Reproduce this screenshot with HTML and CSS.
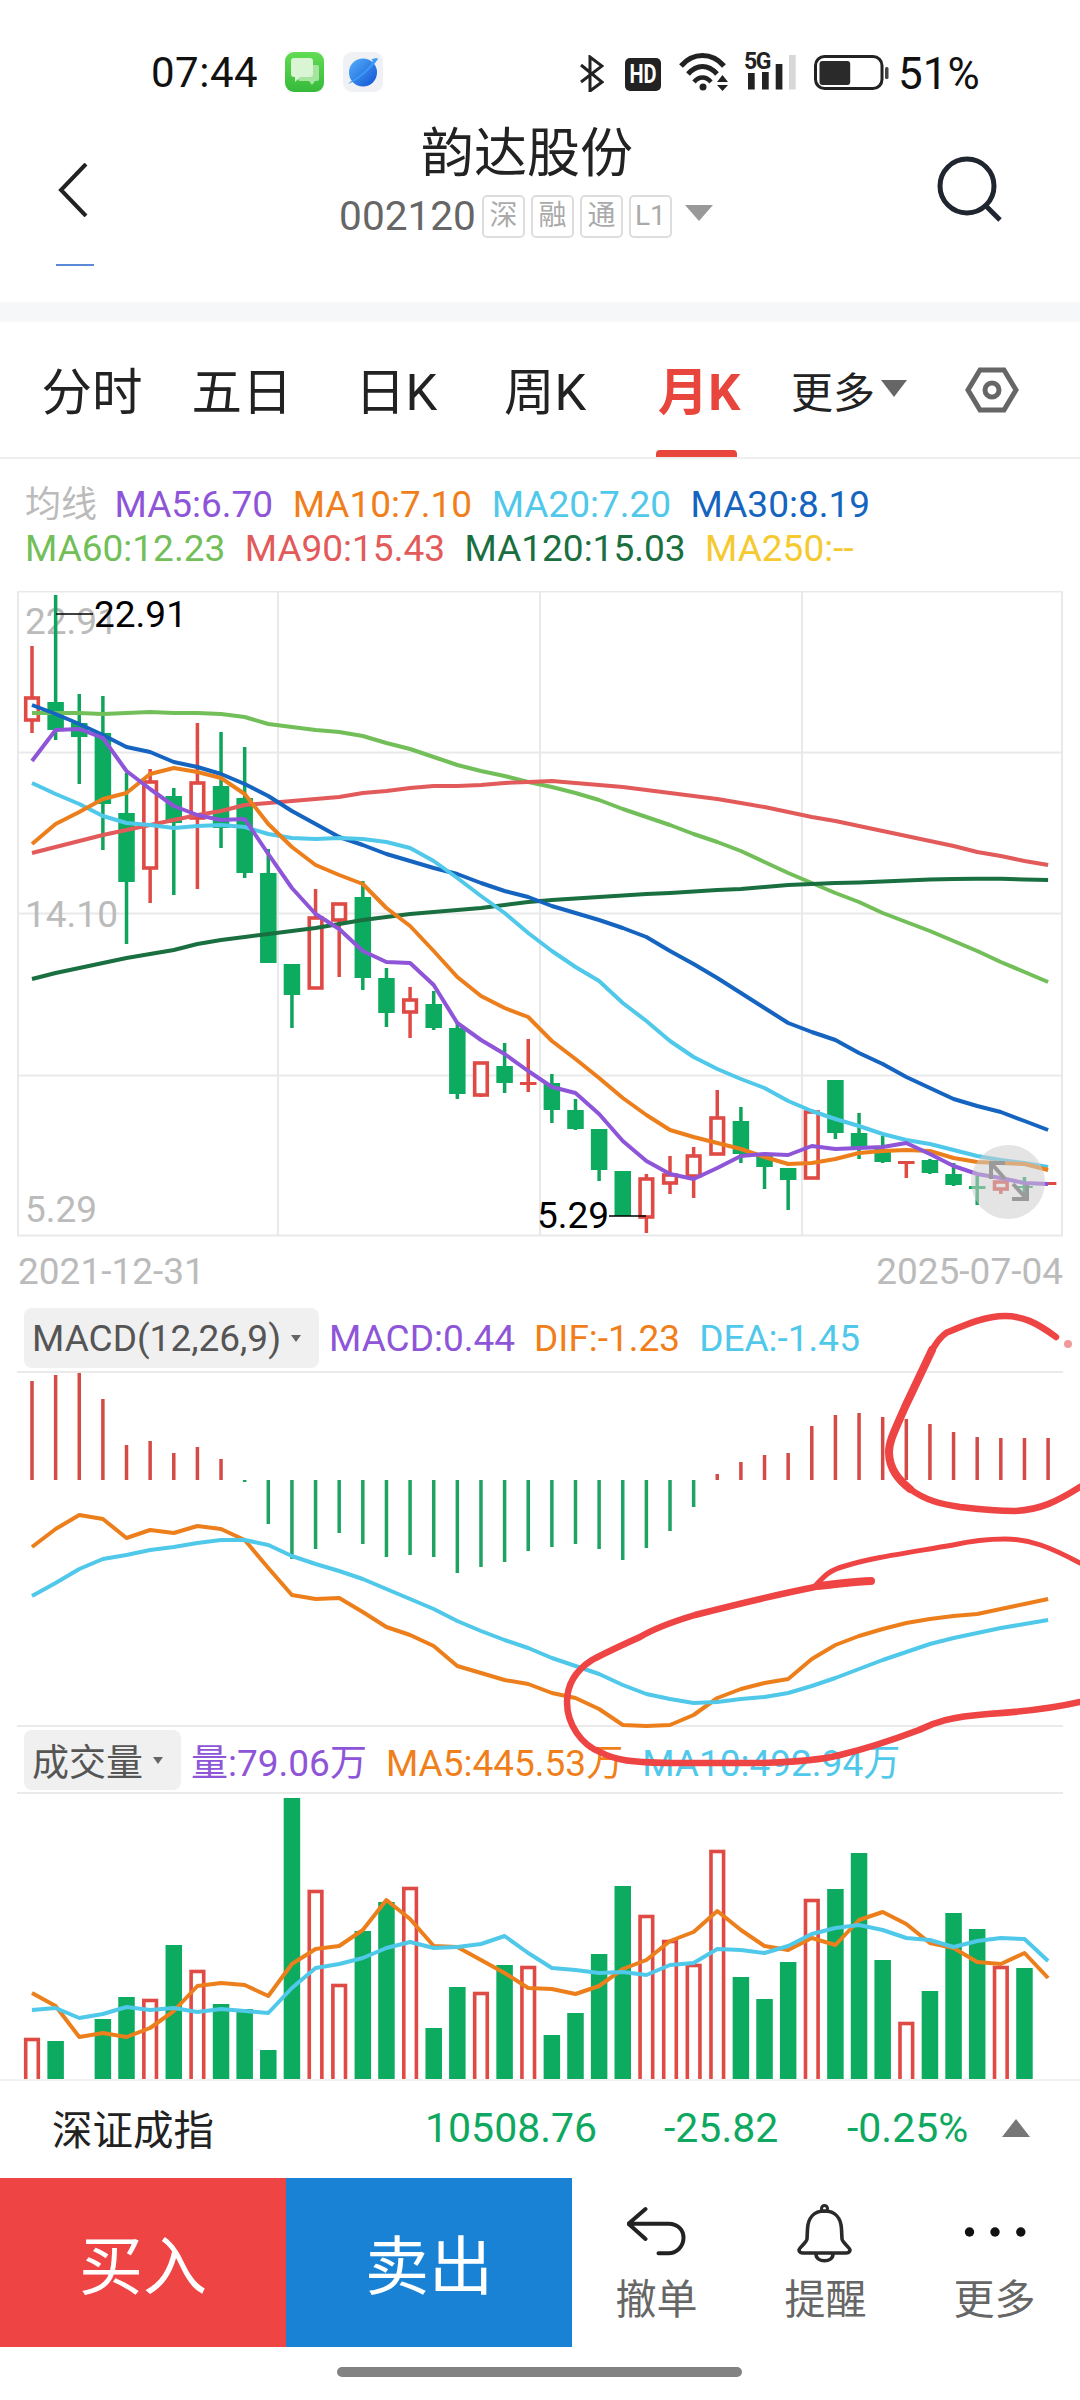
FILE: index.html
```html
<!DOCTYPE html>
<html lang="zh-CN">
<head>
    <meta charset="UTF-8">
    <meta name="viewport" content="width=device-width, initial-scale=1.0">
    <title>韵达股份</title>
    <link rel="stylesheet" href="styles.css">
</head>
<body>
    <div class="page">
        <!-- status bar -->
        <div class="status-bar">
            <span class="clock">07:44</span>
            <svg class="app-icon" viewBox="0 0 39 40">
                <defs>
                    <linearGradient id="msg-bg" x1="0" y1="0" x2="0" y2="1">
                        <stop offset="0" stop-color="#62dc54"/>
                        <stop offset="1" stop-color="#36b93a"/>
                    </linearGradient>
                    <linearGradient id="planet-bg" x1="0" y1="0" x2="1" y2="1">
                        <stop offset="0" stop-color="#53b0fa"/>
                        <stop offset="1" stop-color="#1252d4"/>
                    </linearGradient>
                </defs>
                <rect width="39" height="40" rx="9" fill="url(#msg-bg)"/>
                <path d="M15 13 H32 Q34 13 34 15 V27 Q34 29 32 29 H30 L27 33 L24 29 H15 Q13 29 13 27 V15 Q13 13 15 13 Z" fill="#a6e59f"/>
                <path d="M9 6 H25 Q28 6 28 9 V22 Q28 25 25 25 H15 L10 30 V25 H9 Q6 25 6 22 V9 Q6 6 9 6 Z" fill="#d9f5d4"/>
            </svg>
            <svg class="app-icon app-icon-2" viewBox="0 0 40 40">
                <rect width="40" height="40" rx="9" fill="#eff1f5"/>
                <circle cx="20" cy="20.5" r="14" fill="url(#planet-bg)"/>
                <path d="M5 32 C12 30 27 19 35 7 C36 6 30 6 28 8 C32 7 28 13 22 19 C15 25 8 29 5 32 Z" fill="#3d9bf5"/>
            </svg>
            <div class="status-right">
                <svg class="ic-bt" viewBox="0 0 24 37">
                    <path d="M1 10 L22 27 L10 36 V2 L22 11 L1 27" fill="none" stroke="#222" stroke-width="3"/>
                </svg>
                <span class="hd"><b>HD</b></span>
                <svg class="ic-wifi" viewBox="0 0 51 38">
                    <path d="M2 13 C14 -1 33 -1 45 13" fill="none" stroke="#222" stroke-width="5"/>
                    <path d="M9 21 C18 11 29 11 38 21" fill="none" stroke="#222" stroke-width="5"/>
                    <path d="M15 29 C20 23 27 23 32 29" fill="none" stroke="#222" stroke-width="4.5"/>
                    <circle cx="24" cy="34" r="3.5" fill="#222"/>
                    <path d="M38 29 L43.5 22 L49 29 Z M38 32 H49 L43.5 38 Z" fill="#222"/>
                </svg>
                <div class="ic-signal">
                    <span class="five-g">5G</span>
                    <svg viewBox="0 0 48 35">
                        <rect x="0" y="18" width="6.7" height="16.5" fill="#222"/>
                        <rect x="14" y="17" width="6.7" height="17.5" fill="#222"/>
                        <rect x="27.7" y="9" width="6.7" height="25.5" fill="#222"/>
                        <rect x="41" y="0" width="6.7" height="34.5" fill="#d8d8d8"/>
                    </svg>
                </div>
                <svg class="ic-battery" viewBox="0 0 75 35">
                    <rect x="1.5" y="1.5" width="66.5" height="32" rx="9" fill="none" stroke="#222" stroke-width="3"/>
                    <rect x="5.5" y="6" width="30.7" height="24" rx="3" fill="#2a2a2a"/>
                    <rect x="71" y="12" width="3.5" height="12" rx="1.5" fill="#444"/>
                </svg>
                <span class="battery-pct">51%</span>
            </div>
        </div>

        <!-- header -->
        <div class="header">
            <svg class="back" viewBox="0 0 30 54">
                <path d="M28 1 L3 27 L28 53" fill="none" stroke="#222" stroke-width="4"/>
            </svg>
            <div class="header-center">
                <div class="stock-name">韵达股份</div>
                <div class="stock-code">
                    <span class="code">002120</span>
                    <span class="badge">深</span>
                    <span class="badge">融</span>
                    <span class="badge">通</span>
                    <span class="badge">L1</span>
                    <span class="code-arrow"></span>
                </div>
            </div>
            <svg class="search" viewBox="0 0 66 66">
                <circle cx="31" cy="30" r="27" fill="none" stroke="#1f2630" stroke-width="5"/>
                <path d="M50 50 L64 64" stroke="#1f2630" stroke-width="5"/>
            </svg>
            <span class="header-dash"></span>
        </div>
        <div class="strip"></div>

        <!-- period tabs -->
        <div class="tabs">
            <span class="tab">分时</span>
            <span class="tab">五日</span>
            <span class="tab">日K</span>
            <span class="tab">周K</span>
            <span class="tab on">月K</span>
            <span class="tab tab-more">更多<i class="tab-arrow"></i></span>
            <span class="tab">
                <svg class="hex" viewBox="0 0 54 46">
                    <path d="M15 3 H39 L51 23 L39 43 H15 L3 23 Z" fill="none" stroke="#666" stroke-width="5"/>
                    <circle cx="27" cy="23" r="7" fill="none" stroke="#666" stroke-width="5"/>
                </svg>
            </span>
        </div>

        <!-- moving averages -->
        <div class="ma-legend">
            <div class="ma-row">
                <span class="c-gray ma-title">均线</span>
                <span class="c-ma5">MA5:6.70</span>
                <span class="c-ma10">MA10:7.10</span>
                <span class="c-ma20">MA20:7.20</span>
                <span class="c-ma30">MA30:8.19</span>
            </div>
            <div class="ma-row">
                <span class="c-ma60">MA60:12.23</span>
                <span class="c-ma90">MA90:15.43</span>
                <span class="c-ma120">MA120:15.03</span>
                <span class="c-ma250">MA250:--</span>
            </div>
        </div>

        <!-- k-line chart -->
        <svg class="chart chart-k" viewBox="0 590 1080 646">
            <g class="grid">
                <rect x="18" y="590.5" width="1044" height="644"/>
                <path d="M18 751.5 H1062 M18 912.5 H1062 M18 1074.5 H1062 M278 591 V1235 M540 591 V1235 M802 591 V1235"/>
            </g>
            <text class="axis-text" x="25" y="633">22.91</text>
            <text class="axis-text" x="25" y="926">14.10</text>
            <text class="axis-text" x="25" y="1221">5.29</text>
            <g id="candles"></g>
            <g id="ma-lines"></g>
            <path class="mark-line" d="M56 613 H93 M609 1215 H646"/>
            <text class="mark-text" x="94" y="626">22.91</text>
            <text class="mark-text" x="537" y="1227">5.29</text>
            <g class="expand">
                <circle cx="1008" cy="1181" r="37"/>
                <path d="M1005 1178 L991 1162 M991 1178 V1162 H1005 M1013 1183 L1027 1198 M1027 1184 V1198 H1012"/>
            </g>
        </svg>

        <div class="date-row">
            <span>2021-12-31</span>
            <span>2025-07-04</span>
        </div>

        <!-- macd -->
        <div class="ind-head">
            <span class="ind-btn">MACD(12,26,9)<i class="ind-arrow"></i></span>
            <span class="c-ma5">MACD:0.44</span>
            <span class="c-ma10">DIF:-1.23</span>
            <span class="c-ma20">DEA:-1.45</span>
        </div>
        <svg class="chart chart-macd" viewBox="0 1367 1080 362">
            <path class="rule" d="M17 1371 H1063 M17 1725 H1063"/>
            <g id="macd-bars"></g>
            <g id="macd-lines"></g>
        </svg>

        <!-- volume -->
        <div class="ind-head">
            <span class="ind-btn">成交量<i class="ind-arrow"></i></span>
            <span class="c-ma5">量:79.06万</span>
            <span class="c-ma10">MA5:445.53万</span>
            <span class="c-ma20">MA10:492.94万</span>
        </div>
        <svg class="chart chart-vol" viewBox="0 1789 1080 289">
            <path class="rule" d="M17 1792 H1063"/>
            <g id="vol-bars"></g>
            <g id="vol-lines"></g>
        </svg>

        <!-- index ticker -->
        <div class="ticker">
            <span class="ticker-name">深证成指</span>
            <span class="ticker-val">10508.76</span>
            <span class="ticker-chg">-25.82</span>
            <span class="ticker-pct">-0.25%</span>
            <span class="ticker-arrow"></span>
        </div>

        <!-- bottom actions -->
        <div class="actions">
            <div class="trade trade-buy">买入</div>
            <div class="trade trade-sell">卖出</div>
            <div class="action">
                <svg class="action-icon" viewBox="0 0 60 60">
                    <path d="M18.5 5 L1.5 19.7 L18.5 35 M1.5 19.7 H41.5 C51 19.7 56.5 26 56.5 33.7 C56.5 42 50 49.3 41.5 49.3 H31.5" fill="none" stroke="#222" stroke-width="4" stroke-linecap="round" stroke-linejoin="round"/>
                </svg>
                <span>撤单</span>
            </div>
            <div class="action">
                <svg class="action-icon" viewBox="0 0 60 60">
                    <path d="M28.5 7 C18 7 12 14 11.5 25 L11 35 C11 38 3 44 3 46 C3 48 5 49 7 49 H50 C52 49 54 48 54 46 C54 44 46 38 46 35 L45.5 25 C45 14 39 7 28.5 7 Z" fill="none" stroke="#2a2a2a" stroke-width="3.6"/>
                    <circle cx="28.5" cy="4.5" r="3" fill="none" stroke="#2a2a2a" stroke-width="3"/>
                    <path d="M20 50 C20 59 37 59 37 50" fill="none" stroke="#2a2a2a" stroke-width="3.6"/>
                </svg>
                <span>提醒</span>
            </div>
            <div class="action">
                <svg class="action-icon" viewBox="0 0 64 60">
                    <circle cx="6.5" cy="28" r="4.7" fill="#111"/>
                    <circle cx="32" cy="28" r="4.7" fill="#111"/>
                    <circle cx="57.8" cy="28" r="4.7" fill="#111"/>
                </svg>
                <span>更多</span>
            </div>
        </div>

        <div class="home-bar"><span></span></div>

        <!-- pen marks somebody drew on the screenshot -->
        <svg class="pen" viewBox="0 0 1080 2400">
            <path d="M1056 1337 C1036 1322 1022 1316 1005 1316 C985 1316 965 1325 946 1333 C938 1339 936 1344 932 1350"/>
            <path class="pen-thick" d="M932 1350 L905 1407 C895 1430 889 1441 889 1452 C889 1470 900 1481 910 1489"/>
            <path d="M910 1489 C925 1500 940 1504 960 1507 C985 1510 1000 1511 1015 1511 C1040 1510 1058 1501 1080 1487"/>
            <path d="M815 1587 C780 1594 730 1606 695 1615 C665 1624 650 1631 640 1637 C620 1646 605 1653 592 1660 C578 1669 567 1683 567 1702 C567 1725 582 1745 600 1752 C615 1760 630 1763 680 1763 H760 C800 1762 825 1759 840 1755 C865 1749 895 1739 919 1730 C935 1722 950 1717 988 1714 C1020 1712 1050 1709 1080 1702"/>
            <path class="pen-thick" d="M818 1586 C840 1584 855 1581 871 1581"/>
            <path class="pen-thin" d="M815 1586 C825 1575 830 1570 845 1566 C870 1558 900 1554 953 1545 C975 1540 990 1539 1005 1539 C1030 1539 1050 1547 1080 1563"/>
            <circle class="pen-dot" cx="1068" cy="1344" r="4"/>
        </svg>
    </div>
    <script src="chart.js"></script>
</body>
</html>
```

FILE: styles.css
```css
* {
    box-sizing: border-box;
}

body {
    margin: 0;
    background-color: #fff;
    font-family: Roboto, "Noto Sans CJK SC", sans-serif;
    color: #222;
}

.page {
    position: relative;
    width: 1080px;
    height: 2400px;
    overflow: hidden;
    display: flex;
    flex-direction: column;
}

/* status bar */
.status-bar {
    height: 112px;
    flex: none;
    display: flex;
    align-items: flex-start;
    padding: 52px 0 0 151px;
}

.clock {
    font-size: 42px;
    line-height: 42px;
    color: #111;
    letter-spacing: 0.5px;
}

.app-icon {
    width: 39px;
    height: 40px;
    margin-left: 27px;
    flex: none;
}

.app-icon-2 {
    width: 40px;
    margin-left: 19px;
}

.status-right {
    display: flex;
    align-items: flex-start;
    position: absolute;
    left: 580px;
    top: 53px;
}

.ic-bt {
    width: 24px;
    height: 37px;
    margin-top: 2px;
}

.hd {
    width: 36px;
    height: 33px;
    margin: 5px 0 0 21px;
    background-color: #222;
    border-radius: 5px;
    color: #fff;
    font-size: 25px;
    line-height: 33px;
    text-align: center;
}

.hd b {
    display: inline-block;
    transform: scaleX(0.8);
}

.ic-wifi {
    width: 51px;
    height: 38px;
    margin-left: 18px;
}

.ic-signal {
    width: 52px;
    margin-left: 14px;
    position: relative;
    height: 37px;
}

.ic-signal svg {
    width: 48px;
    height: 35px;
    position: absolute;
    left: 4px;
    top: 2px;
}

.five-g {
    position: absolute;
    left: 0;
    top: -1px;
    font-size: 23px;
    line-height: 20px;
    font-weight: 700;
    color: #222;
    letter-spacing: -1.5px;
}

.ic-battery {
    width: 75px;
    height: 35px;
    margin: 2px 0 0 18px;
}

.battery-pct {
    font-size: 44px;
    line-height: 42px;
    color: #111;
    margin-left: 9px;
    white-space: nowrap;
}

/* header */
.header {
    position: relative;
    height: 190px;
    flex: none;
    display: flex;
    align-items: flex-start;
    padding-left: 58px;
}

.back {
    width: 30px;
    height: 54px;
    margin-top: 51px;
    margin-right: 30px;
}

.header-center {
    width: 818px;
    text-align: center;
}

.stock-name {
    font-size: 53px;
    line-height: 72px;
    margin-top: 6px;
    color: #222;
}

.stock-code {
    display: flex;
    align-items: center;
    justify-content: center;
    gap: 6px;
    margin-top: 4px;
}

.code {
    font-size: 40.6px;
    line-height: 44px;
    color: #666;
}

.badge {
    width: 43px;
    height: 43px;
    border: 2px solid #ddd;
    border-radius: 5px;
    font-size: 28px;
    line-height: 38px;
    text-align: center;
    color: #aaa;
}

.code-arrow {
    width: 0;
    height: 0;
    margin: -6px 2px 0 7px;
    border-left: 14px solid transparent;
    border-right: 14px solid transparent;
    border-top: 16px solid #999;
}

.search {
    width: 66px;
    height: 66px;
    margin-top: 44px;
}

.header-dash {
    position: absolute;
    left: 56px;
    top: 152px;
    width: 38px;
    height: 2px;
    background-color: #5a8ad8;
}

.strip {
    height: 20px;
    flex: none;
    background-color: #f6f7f9;
}

/* tabs */
.tabs {
    height: 137px;
    flex: none;
    display: grid;
    grid-template-columns: 150px 150px 158px 140px 168px 125px 168px;
    padding-left: 17px;
    border-bottom: 2px solid #eee;
}

.tab {
    position: relative;
    display: flex;
    justify-content: center;
    align-items: flex-start;
    padding-top: 36px;
    font-size: 50.5px;
    line-height: 70px;
    color: #222;
}

.tab.on {
    color: #e8453c;
    font-weight: 700;
}

.tab.on::after {
    content: "";
    position: absolute;
    left: 41px;
    top: 128px;
    width: 81px;
    height: 7px;
    background-color: #e8453c;
    border-radius: 4px 4px 0 0;
}

.tab-more {
    font-size: 42px;
    justify-content: flex-start;
    padding: 37px 0 0 8px;
}

.tab-arrow {
    width: 0;
    height: 0;
    margin: 21px 0 0 6px;
    border-left: 13px solid transparent;
    border-right: 13px solid transparent;
    border-top: 17px solid #666;
}

.hex {
    width: 54px;
    height: 46px;
    margin-top: 9px;
}

/* moving average legend */
.ma-legend {
    height: 132px;
    flex: none;
    padding: 24px 0 0 25px;
    font-size: 37px;
    line-height: 44px;
}

.ma-row {
    display: flex;
    gap: 19.5px;
    white-space: nowrap;
}

.ma-title {
    font-size: 36px;
    width: 70px;
}

.c-gray { color: #bbb; }
.c-ma5 { color: #8e55d8; }
.c-ma10 { color: #f07f1b; }
.c-ma20 { color: #4fc8ea; }
.c-ma30 { color: #1464c0; }
.c-ma60 { color: #72bf5a; }
.c-ma90 { color: #e25a5a; }
.c-ma120 { color: #1a6f40; }
.c-ma250 { color: #f5c92f; }

/* charts */
.chart {
    display: block;
    width: 1080px;
    flex: none;
    overflow: hidden;
}

.chart-k { height: 646px; }
.chart-macd { height: 362px; }
.chart-vol { height: 289px; }

.grid rect,
.grid path {
    fill: none;
    stroke: #e9e9e9;
    stroke-width: 2;
}

.rule {
    fill: none;
    stroke: #eaeaea;
    stroke-width: 2;
}

.axis-text {
    font-size: 37px;
    fill: #bbb;
}

.mark-text {
    font-size: 37px;
    fill: #000;
}

.mark-line {
    fill: none;
    stroke: #000;
    stroke-width: 1.5;
}

.expand circle {
    fill: rgba(205, 205, 205, 0.55);
}

.expand path {
    fill: none;
    stroke: #9a9a9a;
    stroke-width: 4;
}

.wick-r { stroke: #df4a45; stroke-width: 3.5; }
.wick-g { stroke: #0fa45c; stroke-width: 3.5; }
.body-r { fill: #fff; stroke: #df4a45; stroke-width: 3.6; }
.body-g { fill: #0cab5f; }
.bar-r { stroke: #d44a44; stroke-width: 3.5; }
.bar-g { stroke: #1ea362; stroke-width: 3.5; }

.line {
    fill: none;
    stroke-width: 4;
    stroke-linejoin: round;
}

.date-row {
    height: 71px;
    flex: none;
    display: flex;
    justify-content: space-between;
    align-items: center;
    padding: 0 17px 2px 18px;
    font-size: 37px;
    color: #bbb;
}

/* indicator headers */
.ind-head {
    height: 60px;
    flex: none;
    display: flex;
    align-items: center;
    gap: 19px;
    padding-left: 24px;
    font-size: 37px;
    white-space: nowrap;
}

.ind-btn {
    display: flex;
    align-items: center;
    height: 60px;
    padding: 0 18px 0 8px;
    margin-right: -9px;
    background-color: #f0f0f0;
    border-radius: 8px;
    color: #555;
}

.ind-arrow {
    width: 0;
    height: 0;
    margin-left: 10px;
    border-left: 5px solid transparent;
    border-right: 5px solid transparent;
    border-top: 7px solid #666;
}

/* ticker */
.ticker {
    height: 99px;
    flex: none;
    display: flex;
    align-items: center;
    border-top: 2px solid #f2f2f2;
    padding: 0 0 4px 52px;
    font-size: 41px;
    color: #0ea860;
    white-space: nowrap;
}

.ticker-name {
    width: 373px;
    font-size: 40.5px;
    color: #222;
}

.ticker-val { width: 239px; }
.ticker-chg { width: 183px; }
.ticker-pct { width: 155px; }

.ticker-arrow {
    width: 0;
    height: 0;
    margin-top: 0;
    border-left: 14px solid transparent;
    border-right: 14px solid transparent;
    border-bottom: 18px solid #777;
}

/* bottom actions */
.actions {
    height: 169px;
    flex: none;
    display: flex;
}

.trade {
    width: 286px;
    display: flex;
    justify-content: center;
    align-items: center;
    padding-bottom: 4px;
    font-size: 64px;
    color: #fff;
}

.trade-buy { background-color: #ee4444; }
.trade-sell { background-color: #1a82d4; }

.action {
    width: 169px;
    display: flex;
    flex-direction: column;
    align-items: center;
    padding-top: 26px;
    font-size: 41px;
    line-height: 54px;
    color: #666;
}

.action-icon {
    width: 60px;
    height: 60px;
    margin-bottom: 9px;
}

.action:last-child .action-icon {
    width: 64px;
}

.home-bar {
    flex: 1;
    padding-top: 20px;
}

.home-bar span {
    display: block;
    width: 405px;
    height: 10px;
    margin-left: 337px;
    background-color: #828282;
    border-radius: 5px;
}

/* pen marks */
.pen {
    position: absolute;
    left: 0;
    top: 0;
    width: 1080px;
    height: 2400px;
    pointer-events: none;
}

.pen path {
    fill: none;
    stroke: #ee4444;
    stroke-width: 6.5;
    stroke-linecap: round;
}

.pen .pen-thick {
    stroke-width: 8;
}

.pen .pen-thin {
    stroke-width: 5;
}

.pen-dot {
    fill: #f09a9a;
}
```

FILE: chart.js
```js
const SVG_NS = "http://www.w3.org/2000/svg";

// x position of a month on all three charts
function xAt(i) {
    return 32 + i * 23.63;
}

function addEl(parent, tag, attrs) {
    const el = document.createElementNS(SVG_NS, tag);
    for (const key in attrs) {
        el.setAttribute(key, attrs[key]);
    }
    parent.appendChild(el);
    return el;
}

function addLine(parentId, ys, color) {
    const points = ys.map((y, i) => xAt(i).toFixed(1) + "," + y).join(" ");
    const line = addEl(document.getElementById(parentId), "polyline", { class: "line", points: points });
    line.style.stroke = color;
}

const PURPLE = "#8e55d8";
const ORANGE = "#ec7f1c";
const CYAN = "#4fc8ea";
const BLUE = "#1464c0";
const LIGHT_GREEN = "#72bf5a";
const SOFT_RED = "#e25a5a";
const DARK_GREEN = "#1a6f40";

// [color, body top, body bottom, high, low], in page pixels
const candles = [
    ["r", 697, 719, 645, 732], ["g", 701, 729, 594, 739], ["g", 722, 736, 693, 783], ["g", 732, 803, 695, 849],
    ["g", 812, 881, 772, 943], ["r", 781, 867, 768, 902], ["g", 795, 822, 787, 894], ["r", 782, 817, 722, 888],
    ["g", 785, 827, 731, 847], ["g", 797, 872, 746, 877], ["g", 872, 962, 848, 962], ["g", 963, 994, 963, 1027],
    ["r", 917, 987, 888, 987], ["r", 903, 919, 903, 976], ["g", 896, 977, 880, 989], ["g", 977, 1012, 967, 1026],
    ["r", 999, 1011, 986, 1037], ["g", 1003, 1027, 990, 1029], ["g", 1027, 1093, 1021, 1098], ["r", 1062, 1094, 1062, 1096],
    ["g", 1065, 1082, 1042, 1092], ["r", 1081, 1084, 1038, 1091], ["g", 1082, 1109, 1073, 1122], ["g", 1109, 1128, 1098, 1129],
    ["g", 1128, 1169, 1128, 1180], ["g", 1170, 1215, 1170, 1215], ["r", 1178, 1216, 1173, 1232], ["r", 1174, 1182, 1155, 1193],
    ["r", 1155, 1175, 1146, 1197], ["r", 1117, 1153, 1089, 1153], ["g", 1120, 1153, 1106, 1162], ["g", 1153, 1166, 1153, 1188],
    ["g", 1167, 1179, 1167, 1209], ["r", 1111, 1177, 1111, 1177], ["g", 1079, 1132, 1079, 1138], ["g", 1132, 1148, 1112, 1158],
    ["g", 1148, 1161, 1135, 1162], ["r", 1160, 1163, 1160, 1177], ["g", 1159, 1172, 1158, 1173], ["g", 1173, 1184, 1162, 1185],
    ["g", 1185, 1188, 1175, 1204], ["r", 1181, 1188, 1181, 1193], ["g", 1185, 1187, 1176, 1196], ["r", 1181, 1184, 1181, 1184]
];

const candleGroup = document.getElementById("candles");
candles.forEach((c, i) => {
    const x = xAt(i);
    const [color, top, bottom, high, low] = c;
    if (high < top || low > bottom) {
        addEl(candleGroup, "line", { class: "wick-" + color, x1: x, x2: x, y1: high, y2: low });
    }
    const thin = color === "r" && bottom - top < 5;
    if (color === "g" || thin) {
        addEl(candleGroup, "rect", {
            class: "body-g", x: x - 8.25, y: top, width: 16.5, height: bottom - top,
            style: thin ? "fill:#df4a45" : ""
        });
    } else {
        addEl(candleGroup, "rect", { class: "body-r", x: x - 6.3, y: top, width: 12.6, height: bottom - top });
    }
});

addLine("ma-lines", [712, 712, 712, 713, 712, 711, 712, 712, 713, 716, 723, 726, 729, 731, 735, 742, 748, 756, 764, 770, 775, 781,
    786, 792, 799, 808, 816, 824, 833, 841, 850, 861, 872, 882, 892, 901, 912, 921, 930, 940, 950, 961, 971, 981], LIGHT_GREEN);
addLine("ma-lines", [852, 846, 840, 834, 829, 824, 819, 814, 810, 804, 802, 800, 798, 796, 792, 790, 787, 785, 785, 784, 782, 781,
    780, 782, 784, 786, 789, 792, 795, 798, 802, 806, 811, 816, 820, 825, 830, 835, 840, 845, 851, 855, 860, 864], SOFT_RED);
addLine("ma-lines", [978, 972, 967, 962, 957, 953, 949, 943, 939, 936, 933, 930, 927, 923, 919, 916, 913, 911, 909, 907, 904, 901,
    899, 897.5, 896, 894.5, 893, 892, 890.5, 889, 888, 886, 884, 883, 882, 881.5, 880.5, 879.5, 878.5, 878, 877.7, 877.7, 878.5, 879], DARK_GREEN);
addLine("ma-lines", [704, 713, 723, 734, 746, 751, 761, 766, 773, 783, 795, 810, 823, 836, 844, 853, 860, 867, 873, 882, 890, 896,
    905, 912, 919, 927, 936, 950, 963, 977, 992, 1007, 1022, 1031, 1039, 1052, 1063, 1076, 1087, 1098, 1105, 1111, 1120, 1129], BLUE);
addLine("ma-lines", [782, 793, 803, 815, 822, 824, 827, 825, 824, 826, 833, 837, 838, 837, 838, 841, 847, 860, 877, 895, 912, 932,
    950, 966, 980, 1002, 1020, 1040, 1056, 1068, 1078, 1087, 1100, 1110, 1118, 1125, 1133, 1139, 1143, 1149, 1155, 1159, 1162, 1166], CYAN);
addLine("ma-lines", [843, 823, 811, 798, 792, 773, 767, 771, 777, 793, 823, 846, 864, 874, 883, 907, 925, 950, 976, 995, 1007, 1016,
    1040, 1058, 1077, 1097, 1114, 1129, 1136, 1142, 1148, 1156, 1163, 1162, 1158, 1152, 1150, 1149, 1150, 1157, 1161, 1162, 1163, 1169], ORANGE);
addLine("ma-lines", [760, 729, 728, 737, 770, 788, 805, 814, 819, 818, 853, 887, 913, 928, 950, 961, 962, 984, 1022, 1039, 1053, 1070,
    1086, 1092, 1113, 1140, 1160, 1173, 1178, 1167, 1155, 1153, 1154, 1145, 1148, 1147, 1146, 1142, 1153, 1165, 1173, 1177, 1182, 1183], PURPLE);

// macd bars start from the zero line, y is the far end of each bar
const MACD_ZERO = 1479;
const macdBars = [1380, 1374, 1372, 1398, 1444, 1440, 1452, 1446, 1458, 1481, 1523, 1558, 1548, 1532, 1543, 1556, 1554, 1556, 1572, 1566, 1561, 1550,
    1546, 1543, 1548, 1559, 1547, 1530, 1506, 1473, 1461, 1454, 1452, 1425, 1414, 1412, 1416, 1418, 1423, 1431, 1436, 1437, 1437, 1437];
const macdGroup = document.getElementById("macd-bars");
macdBars.forEach((y, i) => {
    const color = y < MACD_ZERO ? "r" : "g";
    addEl(macdGroup, "line", { class: "bar-" + color, x1: xAt(i), x2: xAt(i), y1: MACD_ZERO, y2: y });
});

addLine("macd-lines", [1546, 1528, 1514, 1518, 1537, 1529, 1532, 1525, 1528, 1539, 1567, 1594, 1598, 1597, 1611, 1626, 1634, 1645, 1665, 1672, 1679, 1683,
    1692, 1697, 1708, 1724, 1725, 1724, 1714, 1697, 1688, 1682, 1678, 1658, 1644, 1635, 1628, 1622, 1618, 1615, 1613, 1608, 1603, 1598], ORANGE);
addLine("macd-lines", [1595, 1582, 1568, 1558, 1554, 1549, 1546, 1542, 1539, 1539, 1544, 1555, 1563, 1570, 1578, 1588, 1598, 1608, 1620, 1630, 1639, 1647,
    1657, 1665, 1673, 1684, 1693, 1698, 1702, 1701, 1698, 1696, 1692, 1685, 1677, 1668, 1659, 1651, 1643, 1637, 1632, 1627, 1623, 1619], CYAN);

// [color, top of the bar]; 0 means the month has no visible bar
const volBars = [
    ["r", 2037], ["g", 2040], ["g", 0], ["g", 2018], ["g", 1996], ["r", 1998], ["g", 1944], ["r", 1969], ["g", 2003], ["g", 2008], ["g", 2049],
    ["g", 1797], ["r", 1889], ["r", 1983], ["g", 1930], ["g", 1901], ["r", 1886], ["g", 2027], ["g", 1986], ["r", 1991], ["g", 1964], ["r", 1965],
    ["g", 2034], ["g", 2012], ["g", 1953], ["g", 1885], ["r", 1914], ["r", 1939], ["r", 1963], ["r", 1849], ["g", 1976], ["g", 1998], ["g", 1961],
    ["r", 1898], ["g", 1888], ["g", 1852], ["g", 1959], ["r", 2021], ["g", 1990], ["g", 1912], ["g", 1928], ["r", 1965], ["g", 1967], ["r", 0]
];
const VOL_BOTTOM = 2082;
const volGroup = document.getElementById("vol-bars");
volBars.forEach((b, i) => {
    const [color, top] = b;
    if (!top) {
        return;
    }
    if (color === "g") {
        addEl(volGroup, "rect", { class: "body-g", x: xAt(i) - 8.25, y: top, width: 16.5, height: VOL_BOTTOM - top });
    } else {
        addEl(volGroup, "rect", { class: "body-r", x: xAt(i) - 6.3, y: top + 1.5, width: 12.6, height: VOL_BOTTOM - top });
    }
});

addLine("vol-lines", [1992, 2005, 2036, 2032, 2036, 2027, 2010, 1985, 1982, 1984, 1995, 1963, 1948, 1945, 1929, 1899, 1918, 1945, 1946, 1959, 1972, 1987,
    1988, 1993, 1985, 1968, 1959, 1940, 1931, 1910, 1929, 1945, 1949, 1937, 1944, 1919, 1911, 1923, 1942, 1947, 1961, 1963, 1952, 1977], ORANGE);
addLine("vol-lines", [2009, 2007, 2017, 2013, 2006, 2009, 2007, 2011, 2008, 2010, 2012, 1987, 1967, 1963, 1957, 1947, 1941, 1947, 1946, 1943, 1935, 1952,
    1967, 1969, 1972, 1971, 1974, 1964, 1962, 1948, 1949, 1952, 1945, 1933, 1927, 1924, 1929, 1937, 1939, 1946, 1940, 1937, 1938, 1960], CYAN);
```
